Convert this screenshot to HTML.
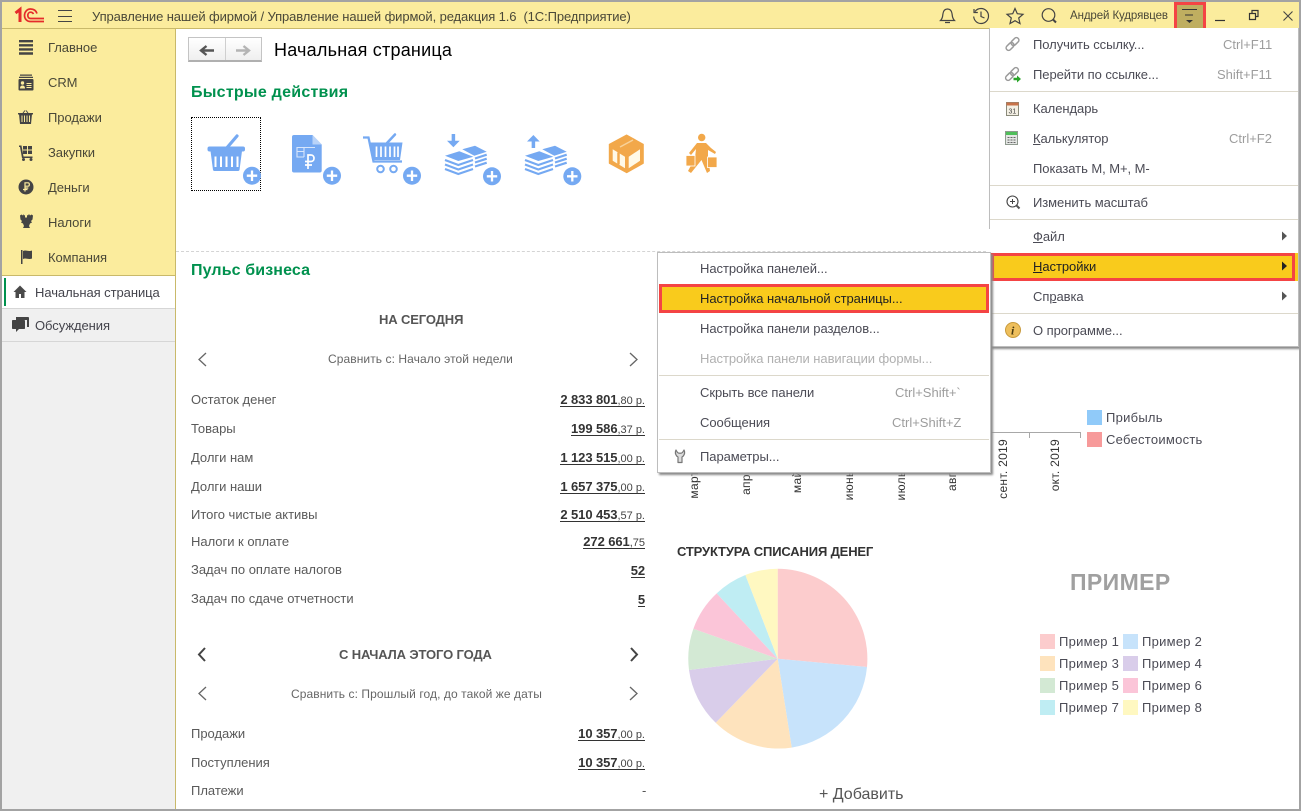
<!DOCTYPE html>
<html lang="ru"><head><meta charset="utf-8"><title>1С</title>
<style>
html,body{margin:0;padding:0;width:1301px;height:811px;overflow:hidden;background:#fff}
body{font-family:"Liberation Sans",Arial,sans-serif;position:relative;color:#4b4b4b}
.a{position:absolute}
.t{position:absolute;white-space:nowrap;line-height:16px;font-size:13px;letter-spacing:-.06px;margin-top:1px}
.side{color:#4a4838}
.m{color:#4b4b55}
.s{color:#9d9d9d;letter-spacing:0}
.l{color:#5a5a5a;letter-spacing:-.02px}
.lg{letter-spacing:.26px}
.h{font-weight:bold;color:#555;letter-spacing:-.13px}
.cmp{font-size:12px;color:#666;letter-spacing:.08px}
.v{position:absolute;right:656px;white-space:nowrap;line-height:13px;height:13px;margin-top:1px;font-size:13px;font-weight:bold;color:#333;border-bottom:1px solid #333;letter-spacing:-.08px}
.v small{font-size:11px;font-weight:normal;color:#444;letter-spacing:0}
.sep{position:absolute;height:1px;background:#dcd8cb}
u{text-decoration-thickness:1px}
.sq{position:absolute;width:15px;height:15px}
svg{position:absolute;left:0;top:0}
</style></head><body>

<!-- title bar -->
<div class="a" style="left:0;top:0;width:1301px;height:29px;background:#fbec9d;border-bottom:1px solid #c9b96a;box-sizing:border-box"></div>
<div class="t" style="left:92px;top:8px;color:#4a4838;letter-spacing:-.105px">Управление нашей фирмой / Управление нашей фирмой, редакция 1.6&nbsp; (1С:Предприятие)</div>
<div class="t" style="left:1070px;top:7px;font-size:11.5px;color:#4a4838;letter-spacing:-.1px">Андрей Кудрявцев</div>

<!-- sidebar -->
<div class="a" style="left:2px;top:29px;width:173px;height:247px;background:#fbec9d;border-bottom:1px solid #c9b96a;box-sizing:border-box"></div>
<div class="a" style="left:2px;top:309px;width:173px;height:502px;background:#f0f0f0"></div>
<div class="a" style="left:2px;top:308px;width:173px;height:1px;background:#d6d6d6"></div>
<div class="a" style="left:2px;top:341px;width:173px;height:1px;background:#d6d6d6"></div>
<div class="a" style="left:175px;top:29px;width:1px;height:782px;background:#c9b96a"></div>
<div class="a" style="left:4px;top:278px;width:2px;height:28px;background:#00914e"></div>
<div class="t side" style="left:48px;top:39px">Главное</div>
<div class="t side" style="left:48px;top:74px">CRM</div>
<div class="t side" style="left:48px;top:109px">Продажи</div>
<div class="t side" style="left:48px;top:144px">Закупки</div>
<div class="t side" style="left:48px;top:179px">Деньги</div>
<div class="t side" style="left:48px;top:214px">Налоги</div>
<div class="t side" style="left:48px;top:249px">Компания</div>
<div class="t" style="left:35px;top:284px;color:#44444c">Начальная страница</div>
<div class="t" style="left:35px;top:317px;color:#44444c">Обсуждения</div>

<!-- page head -->
<div class="a" style="left:188px;top:37px;width:74px;height:25px;box-sizing:border-box;border:1px solid #c4c4c4;border-bottom:2px solid #b0b0b0;background:linear-gradient(#fff,#efefef)"></div>
<div class="a" style="left:225px;top:38px;width:1px;height:22px;background:#cfcfcf"></div>
<div class="t" style="left:274px;top:39px;font-size:18px;line-height:20px;color:#000;letter-spacing:.22px">Начальная страница</div>
<div class="t" style="left:191px;top:83px;font-size:16px;line-height:18px;font-weight:bold;color:#00914e;letter-spacing:.25px">Быстрые действия</div>
<div class="a" style="left:191px;top:117px;width:70px;height:74px;box-sizing:border-box;border:1px dotted #000"></div>
<div class="a" style="left:176px;top:251px;width:815px;border-top:1px dashed #d4d4d4"></div>
<div class="t" style="left:191px;top:261px;font-size:16px;line-height:18px;font-weight:bold;color:#00914e;letter-spacing:.12px">Пульс бизнеса</div>

<!-- pulse -->
<div class="t h" style="left:379px;top:311px">НА СЕГОДНЯ</div>
<div class="t cmp" style="left:328px;top:350px">Сравнить с: Начало этой недели</div>
<div class="t l" style="left:191px;top:391px">Остаток денег</div>
<div class="t l" style="left:191px;top:420px">Товары</div>
<div class="t l" style="left:191px;top:449px">Долги нам</div>
<div class="t l" style="left:191px;top:478px">Долги наши</div>
<div class="t l" style="left:191px;top:506px">Итого чистые активы</div>
<div class="t l" style="left:191px;top:533px">Налоги к оплате</div>
<div class="t l" style="left:191px;top:561px">Задач по оплате налогов</div>
<div class="t l" style="left:191px;top:590px">Задач по сдаче отчетности</div>
<div class="v" style="top:392px">2 833 801<small>,80 р.</small></div>
<div class="v" style="top:421px">199 586<small>,37 р.</small></div>
<div class="v" style="top:450px">1 123 515<small>,00 р.</small></div>
<div class="v" style="top:479px">1 657 375<small>,00 р.</small></div>
<div class="v" style="top:507px">2 510 453<small>,57 р.</small></div>
<div class="v" style="top:534px">272 661<small>,75</small></div>
<div class="v" style="top:563px">52</div>
<div class="v" style="top:592px">5</div>
<div class="t h" style="left:339px;top:646px">С НАЧАЛА ЭТОГО ГОДА</div>
<div class="t cmp" style="left:291px;top:685px">Сравнить с: Прошлый год, до такой же даты</div>
<div class="t l" style="left:191px;top:725px">Продажи</div>
<div class="t l" style="left:191px;top:754px">Поступления</div>
<div class="t l" style="left:191px;top:782px">Платежи</div>
<div class="v" style="top:726px">10 357<small>,00 р.</small></div>
<div class="v" style="top:755px">10 357<small>,00 р.</small></div>
<div class="t" style="left:642px;top:782px;color:#555">-</div>

<!-- right charts -->
<div class="sq" style="left:1087px;top:410px;background:#90caf9"></div>
<div class="t m lg" style="left:1106px;top:409px">Прибыль</div>
<div class="sq" style="left:1087px;top:432px;background:#f79a9a"></div>
<div class="t m lg" style="left:1106px;top:431px">Себестоимость</div>
<div class="t" style="left:677px;top:543px;font-weight:bold;color:#333;letter-spacing:-.16px">СТРУКТУРА СПИСАНИЯ ДЕНЕГ</div>
<div class="t" style="left:1070px;top:568px;font-size:23px;line-height:26px;font-weight:bold;color:#a0a0a0;letter-spacing:.4px">ПРИМЕР</div>
<div class="sq" style="left:1040px;top:634px;background:#fccccd"></div><div class="t m lg" style="left:1059px;top:633px">Пример 1</div>
<div class="sq" style="left:1123px;top:634px;background:#c7e3fb"></div><div class="t m lg" style="left:1142px;top:633px">Пример 2</div>
<div class="sq" style="left:1040px;top:656px;background:#fee3bd"></div><div class="t m lg" style="left:1059px;top:655px">Пример 3</div>
<div class="sq" style="left:1123px;top:656px;background:#d9cdea"></div><div class="t m lg" style="left:1142px;top:655px">Пример 4</div>
<div class="sq" style="left:1040px;top:678px;background:#d3e9d4"></div><div class="t m lg" style="left:1059px;top:677px">Пример 5</div>
<div class="sq" style="left:1123px;top:678px;background:#fbc5d8"></div><div class="t m lg" style="left:1142px;top:677px">Пример 6</div>
<div class="sq" style="left:1040px;top:700px;background:#bfedf3"></div><div class="t m lg" style="left:1059px;top:699px">Пример 7</div>
<div class="sq" style="left:1123px;top:700px;background:#fff8c1"></div><div class="t m lg" style="left:1142px;top:699px">Пример 8</div>
<div class="t" style="left:819px;top:785px;font-size:16px;line-height:18px;color:#555;letter-spacing:0">+ Добавить</div>

<!-- base svg: icons on the page, pie, axis -->
<svg width="1301" height="811" viewBox="0 0 1301 811">
 <path d="M777.7 658.7V568.7A90 90 0 0 1 867 667Z" fill="#fccccd"/>
 <path d="M777.7 658.7L867 667A90 90 0 0 1 791.7 747.6Z" fill="#c7e3fb"/>
 <path d="M777.7 658.7L791.7 747.6A90 90 0 0 1 715.7 722.7Z" fill="#fee3bd"/>
 <path d="M777.7 658.7L715.7 722.7A90 90 0 0 1 689 670Z" fill="#d9cdea"/>
 <path d="M777.7 658.7L689 670A90 90 0 0 1 693.4 628.7Z" fill="#d3e9d4"/>
 <path d="M777.7 658.7L693.4 628.7A90 90 0 0 1 716.7 593.4Z" fill="#fbc5d8"/>
 <path d="M777.7 658.7L716.7 593.4A90 90 0 0 1 745.4 575Z" fill="#bfedf3"/>
 <path d="M777.7 658.7L745.4 575A90 90 0 0 1 777.7 568.7Z" fill="#fff8c1"/>

 <!-- axis -->
 <path d="M985 432.5H1081M1029.5 432.5V438M1080.5 432.5V438" stroke="#a8a8a8" fill="none"/>
 <g font-family="Liberation Sans,Arial,sans-serif" font-size="12" fill="#333" text-anchor="end" letter-spacing=".3">
  <text transform="translate(698,439) rotate(-90)">март 2019</text>
  <text transform="translate(750,439) rotate(-90)">апр. 2019</text>
  <text transform="translate(801,439) rotate(-90)">май 2019</text>
  <text transform="translate(853,439) rotate(-90)">июнь 2019</text>
  <text transform="translate(905,439) rotate(-90)">июль 2019</text>
  <text transform="translate(956,439) rotate(-90)">авг. 2019</text>
  <text transform="translate(1007,439) rotate(-90)">сент. 2019</text>
  <text transform="translate(1059,439) rotate(-90)">окт. 2019</text>
 </g>

 <!-- nav arrows -->
 <path d="M201 50.5H214M206.5 46L201 50.5L206.500 55" stroke="#555" stroke-width="2.400" fill="none"/>
 <path d="M236 50.5H249M243.5 46L249 50.5L243.500 55" stroke="#b4b4b4" stroke-width="2.400" fill="none"/>

 <!-- pulse chevrons -->
 <path d="M206 353L199 359.5L206 366M630 353L637 359.5L630 366M206 687L199 693.500L206 700M630 687L637 693.500L630 700" fill="none" stroke="#666" stroke-width="1.300"/>
 <path d="M205 648L199 654.5L205 661M631 648L637 654.5L631 661" fill="none" stroke="#444" stroke-width="2"/>

 <!-- 1C logo -->
 <g fill="none" stroke="#e52b2b">
  <path d="M15.500 13L20 9.500V22" stroke-width="3"/>
  <path d="M37 13.500C36 10.500 33.500 9 30.500 9C27 9 24.500 12 24.500 15.500C24.500 19 27 21.500 30.500 21.500H44" stroke-width="1.700"/>
  <path d="M33.500 14C33 13 32 12.200 30.600 12.200C29 12.200 27.800 13.600 27.800 15.400C27.800 17.200 29 18.500 30.600 18.500H44" stroke-width="1.700"/>
 </g>
 <!-- hamburger -->
 <path d="M58 10.500H72M58 16.500H72M58 21.500H72" stroke="#444" stroke-width="1"/>

 <!-- title right icons -->
 <g fill="none" stroke="#444" stroke-width="1.200">
  <path d="M940.500 20.500H954.500C952 18 952.500 16 952 13.500C951.500 10.500 950 9 947.500 9C945 9 943.500 10.500 943 13.500C942.500 16 943 18 940.500 20.500ZM945 22.500H950"/>
  <path d="M975 11.500C976.500 9.500 978.500 8.500 981 8.500C985.200 8.500 988.500 11.800 988.500 16C988.500 20.200 985.200 23.500 981 23.500C977 23.500 974 20.500 973.700 16.500M974 9V12.500H977.800M981 11.500V16.500L984.500 18"/>
  <path d="M1015 8.500L1017.300 13.700L1023 14.300L1018.700 18L1020 23.500L1015 20.700L1010 23.500L1011.300 18L1007 14.300L1012.700 13.700Z"/>
  <circle cx="1048.500" cy="15" r="6.300"/><path d="M1053 19.500L1056 22.500" stroke-width="2"/>
 </g>
 <!-- window buttons -->
 <rect x="1175" y="3" width="30" height="28.500" fill="#bfae60"/>
 <path d="M1182 9.500H1197M1185 15H1193" stroke="#333" stroke-width="1"/>
 <path d="M1186 20H1193L1189.500 23Z" fill="#333"/>
 <rect x="1175.500" y="3.500" width="29" height="27.500" fill="none" stroke="#f44444" stroke-width="3"/>
 <path d="M1215 20.500H1225" stroke="#333" stroke-width="1.200"/>
 <path d="M1249.500 13.500h6v6h-6zM1252 13V10.500h6v6h-2.500" fill="none" stroke="#333" stroke-width="1.200"/>
 <path d="M1283.500 11.500L1292.500 20.500M1292.500 11.500L1283.500 20.500" stroke="#444" stroke-width="1.100"/>

 <!-- sidebar icons -->
 <g fill="#444">
  <path d="M19 40h14v2.400H19zM19 44.100h14v2.400H19zM19 48.200h14v2.400H19zM19 52.300h14v2.400H19z"/>
  <path d="M20 74.500h12v1.200H20zM19 76.800h14v1.200H19z"/>
  <rect x="18.500" y="79" width="15" height="11.500" rx="1"/>
  <path d="M19 114h13l-1 10H20zM18 113h15v1.500H18z"/>
  <path d="M23 113L25 110.500M28 113L26 110.500" stroke="#444" fill="none"/>
  <path d="M19 145.500h2.500l2 11h9v1.500h-10.500l-2-11H19z"/>
  <rect x="23" y="146" width="4" height="3.500"/><rect x="28" y="146" width="4" height="3.500"/>
  <rect x="23" y="150.500" width="4" height="3.500"/><rect x="28" y="150.500" width="4" height="3.500"/>
  <circle cx="23.500" cy="159.500" r="1.500"/><circle cx="31" cy="159.500" r="1.500"/>
  <circle cx="26" cy="187" r="7.500"/>
  <path d="M23 214l1 1.500 1-.5v2.500h2V215l1 .5 1-1.500 1 1.500 1.500-1 1.500 1-.5 4-1.500 1.500 1 1.500-2 1-1 2.500 1 2h-7l1-2-1-2.500-2-1 1-1.500-1.500-1.500-.5-4 1.500-1 1.500 1z"/>
  <path d="M21 250h1.500v14H21zM23 251c3-1.500 5 1 9-.5v8c-4 1.500-6-1-9 .5z"/>
  <path d="M20 285.500L13.500 292h2v6h3.500v-4h2v4h3.500v-6h2z" fill="#4a4a4a"/>
  <path d="M16 317h12c1 0 1 1 1 1v9h-2v-7H16z"/>
  <path d="M13 320h11c1 0 1 .5 1 1v7c0 1-.5 1-1 1h-5l-3 3v-3h-3c-1 0-1-.5-1-1v-7c0-.5 0-1 1-1z"/>
 </g>
 <g fill="none" stroke="#fbec9d">
  <path d="M22 115.500v6.500M24.500 115.500v6.500M27 115.500v6.500M29.500 115.500v6.500"/>
  <path d="M26.500 83.500h5M26.500 85.500h5M26.500 87.500h5" stroke-width="1"/>
 </g>
 <circle cx="22.500" cy="83" r="1.700" fill="#fbec9d"/><path d="M20 88.500c0-2 1-3 2.500-3s2.500 1 2.500 3z" fill="#fbec9d"/>
 <path d="M24.500 188H28.300M24.500 186.200H28C29.800 186.200 29.800 182.800 28 182.800H25V191.500M23 189.500H27.500" fill="none" stroke="#fbec9d" stroke-width="1.200"/>

 <!-- quick action icons -->
 <path d="M225 150L237 136" stroke="#75a9f2" stroke-width="3.200" stroke-linecap="round"/>
 <rect x="207.500" y="146.500" width="37.500" height="5" rx="2" fill="#75a9f2"/>
 <path d="M210.500 151H242L239.500 170A1.500 1.500 0 0 1 238 171H214.500A1.500 1.500 0 0 1 213 170Z" fill="#75a9f2"/>
 <path d="M215.500 156.500V167M221 156.500V167M226.500 156.500V167M232 156.500V167M237.500 156.500V167" stroke="#fff" stroke-width="2"/>

 <path d="M294 135H312.500L321.700 144.500V170.500A2 2 0 0 1 319.700 172.500H294A2 2 0 0 1 292 170.500V137A2 2 0 0 1 294 135Z" fill="#75a9f2"/>
 <path d="M312.500 135V144.500H321.700Z" fill="#b9d3f8"/>
 <path d="M297 147.500H315M297 151.500H304M297 147V157H304M304 147V157" stroke="#d8e6fb" stroke-width="1.100" fill="none"/>
 <path d="M308 169V155H311C315 155 315 161.500 311 161.500H305M305 165H312" fill="none" stroke="#fff" stroke-width="1.700"/>

 <path d="M363 137.500H368.500L373.500 161.500H402" fill="none" stroke="#75a9f2" stroke-width="2.300"/>
 <path d="M387 143L395 134.500" stroke="#75a9f2" stroke-width="2.500" stroke-linecap="round"/>
 <path d="M370 142.500H402.500L400 160H373.500Z" fill="#75a9f2"/>
 <path d="M376.500 146.500V157M381 146.500V157M385.500 146.500V157M390 146.500V157M394.500 146.500V157M398 146.500V157" stroke="#fff" stroke-width="1.700"/>
 <circle cx="380.500" cy="169" r="3.300" fill="none" stroke="#75a9f2" stroke-width="2"/>
 <circle cx="393.500" cy="169" r="3.300" fill="none" stroke="#75a9f2" stroke-width="2"/>

 <g fill="#75a9f2">
  <path d="M445 155.700L459.300 151.300L473.300 156.700L458.300 161Z"/>
  <path d="M462.300 149.300L475 145.700L486.700 151.700L474.300 155.700Z"/>
 </g>
 <g fill="none" stroke="#75a9f2" stroke-width="2.200">
  <path d="M445 160L458.300 165L473 160M445 164.500L458.300 169.500L473 164.500M445 169L458.300 174L473 169"/>
  <path d="M475 158.500L486.700 154.700M475 162.500L486.700 158.700M475 166.500L486.700 162.700"/>
 </g>
 <path d="M453.400 134V142" stroke="#75a9f2" stroke-width="3.500"/>
 <path d="M447 140.700H459.700L453.400 147.300Z" fill="#75a9f2"/>
 <g fill="#75a9f2">
  <path d="M525 155.700L539.300 151.300L553.300 156.700L538.300 161Z"/>
  <path d="M542.300 149.300L555 145.700L566.700 151.700L554.300 155.700Z"/>
 </g>
 <g fill="none" stroke="#75a9f2" stroke-width="2.200">
  <path d="M525 160L538.300 165L553 160M525 164.500L538.300 169.500L553 164.500M525 169L538.300 174L553 169"/>
  <path d="M555 158.500L566.700 154.700M555 162.500L566.700 158.700M555 166.500L566.700 162.700"/>
 </g>
 <path d="M533.400 140V148" stroke="#75a9f2" stroke-width="3.500"/>
 <path d="M527 141.500H539.700L533.400 135Z" fill="#75a9f2"/>

 <circle cx="252" cy="175.700" r="9" fill="#75a9f2"/><path d="M252 170.500V181M246.800 175.700H257.200" stroke="#fff" stroke-width="2.300"/>
 <circle cx="332" cy="175.700" r="9" fill="#75a9f2"/><path d="M332 170.500V181M326.800 175.700H337.200" stroke="#fff" stroke-width="2.300"/>
 <circle cx="412" cy="175.700" r="9" fill="#75a9f2"/><path d="M412 170.500V181M406.800 175.700H417.200" stroke="#fff" stroke-width="2.300"/>
 <circle cx="492" cy="176.300" r="9" fill="#75a9f2"/><path d="M492 171V181.500M486.800 176.300H497.200" stroke="#fff" stroke-width="2.300"/>
 <circle cx="572.300" cy="176.300" r="9" fill="#75a9f2"/><path d="M572.300 171V181.500M567 176.300H577.500" stroke="#fff" stroke-width="2.300"/>

 <!-- box -->
 <path d="M626.700 135L643.300 144.300V163.300L626.700 172.700L609.300 163.300V144.300Z" fill="#f2a84a" stroke="#f2a84a" stroke-linejoin="round"/>
 <path d="M612.700 149.300L625 156.700V168.300L612.700 160.700ZM628.700 156.700L640 149.300V160.700L628.700 168.300Z" fill="#fff9e6"/>
 <path d="M618.500 152.500V164.500" stroke="#f2a84a" stroke-width="2.500"/>
 <path d="M620 147L633 140" stroke="#f8d29a" stroke-width="1.500"/>
 <!-- person -->
 <circle cx="701.700" cy="137.500" r="3.700" fill="#f2a84a"/>
 <path d="M697 143L706 143L711 148L716 152L715 154L708 150L708 158L710 171L707 173L701.500 160L691 173L688 171L695 158L696 149L691 155L689 153Z" fill="#f2a84a"/>
 <rect x="686" y="155.500" width="9" height="10.500" fill="#f2a84a" stroke="#fff" stroke-width=".8"/>
 <rect x="707.500" y="157" width="9.500" height="10.500" fill="#f2a84a" stroke="#fff" stroke-width=".8"/>
</svg>

<!-- main menu -->
<div class="a" style="left:989px;top:28px;width:310px;height:319px;background:#fff;border:1px solid #bdbdbd;border-top:none;box-sizing:border-box;box-shadow:2px 2px 2px #8a8a8a"></div>
<div class="a" style="left:986px;top:229px;width:5px;height:23px;background:#fff"></div>
<div class="sep" style="left:990px;top:91px;width:308px"></div>
<div class="sep" style="left:990px;top:185px;width:308px"></div>
<div class="sep" style="left:990px;top:219px;width:308px"></div>
<div class="sep" style="left:990px;top:313px;width:308px"></div>
<div class="t m" style="left:1033px;top:36px">Получить ссылку...</div><div class="t s" style="left:1223px;top:36px">Ctrl+F11</div>
<div class="t m" style="left:1033px;top:66px">Перейти по ссылке...</div><div class="t s" style="left:1217px;top:66px">Shift+F11</div>
<div class="t m" style="left:1033px;top:100px">Календарь</div>
<div class="t m" style="left:1033px;top:130px"><u>К</u>алькулятор</div><div class="t s" style="left:1229px;top:130px">Ctrl+F2</div>
<div class="t m" style="left:1033px;top:160px">Показать M, M+, M-</div>
<div class="t m" style="left:1033px;top:194px">Изменить масштаб</div>
<div class="t m" style="left:1033px;top:228px"><u>Ф</u>айл</div>
<div class="a" style="left:992px;top:253px;width:306px;height:28px;background:#f9cb1c"></div>
<div class="a" style="left:991px;top:253px;width:304px;height:28px;box-sizing:border-box;border:3px solid #f44444"></div>
<div class="t" style="left:1033px;top:258px;color:#222"><u>Н</u>астройки</div>
<div class="t m" style="left:1033px;top:288px">Сп<u>р</u>авка</div>
<div class="t m" style="left:1033px;top:322px">О программе...</div>

<!-- sub menu -->
<div class="a" style="left:657px;top:252px;width:334px;height:221px;background:#fff;border:1px solid #bdbdbd;box-sizing:border-box;box-shadow:2px 2px 2px #8a8a8a"></div>
<div class="sep" style="left:659px;top:375px;width:330px"></div>
<div class="sep" style="left:659px;top:439px;width:330px"></div>
<div class="t m" style="left:700px;top:260px">Настройка панелей...</div>
<div class="a" style="left:659px;top:284px;width:330px;height:29px;box-sizing:border-box;background:#f9cb1c;border:3px solid #f44444"></div>
<div class="t" style="left:700px;top:290px;color:#222">Настройка начальной страницы...</div>
<div class="t m" style="left:700px;top:320px">Настройка панели разделов...</div>
<div class="t" style="left:700px;top:350px;color:#b0b0b0">Настройка панели навигации формы...</div>
<div class="t m" style="left:700px;top:384px">Скрыть все панели</div><div class="t s" style="left:895px;top:384px">Ctrl+Shift+`</div>
<div class="t m" style="left:700px;top:414px">Сообщения</div><div class="t s" style="left:892px;top:414px">Ctrl+Shift+Z</div>
<div class="t m" style="left:700px;top:448px">Параметры...</div>

<!-- menu icons -->
<svg width="1301" height="811" viewBox="0 0 1301 811">
 <g fill="none" stroke="#9a9a9a" stroke-width="1.500">
  <g transform="translate(1012.500 44) rotate(45)"><rect x="-2.500" y="-8" width="5" height="9" rx="2.500"/><rect x="-2.500" y="-1" width="5" height="9" rx="2.500"/></g>
  <g transform="translate(1012 74) rotate(45)"><rect x="-2.500" y="-8" width="5" height="9" rx="2.500"/><rect x="-2.500" y="-1" width="5" height="9" rx="2.500"/></g>
 </g>
 <path d="M1013.500 77.800H1017V75.500L1021 79L1017 82.500V80.200H1013.500Z" fill="#2aa52a"/>
 <rect x="1006.500" y="102.500" width="12" height="13" fill="#f4f0e4" stroke="#8a8a7a"/>
 <rect x="1006.500" y="102.500" width="12" height="3" fill="#c8734a"/>
 <text x="1008.500" y="113.500" font-family="Liberation Sans,Arial,sans-serif" font-size="7" fill="#444">31</text>
 <rect x="1005.500" y="131.500" width="12" height="13" fill="#e4e6e4" stroke="#8f9a8f"/>
 <rect x="1006" y="132" width="11" height="3" fill="#4fbf5a"/>
 <path d="M1007.500 137.500h2M1010.500 137.500h2M1013.500 137.500h2M1007.500 140h2M1010.500 140h2M1013.500 140h2M1007.500 142.500h2M1010.500 142.500h2M1013.500 142.500h2" stroke="#666"/>
 <circle cx="1012.500" cy="201.500" r="5.500" fill="none" stroke="#444" stroke-width="1.100"/>
 <path d="M1010 201.500H1015M1012.500 199V204" stroke="#444"/>
 <path d="M1016.500 205.500L1019.500 208.500" stroke="#555" stroke-width="2"/>
 <circle cx="1013" cy="330" r="7.500" fill="#eebf5c" stroke="#c89a3c"/>
 <text x="1011" y="334.500" font-family="Liberation Serif,serif" font-weight="bold" font-style="italic" font-size="12" fill="#4a3a10">i</text>
 <path d="M1282 231.500L1287 236L1282 240.500ZM1282 291.500L1287 296L1282 300.500Z" fill="#555"/>
 <path d="M1282 261.500L1287 266L1282 270.500Z" fill="#222"/>
 <path d="M676 450C674.500 453 676 456 678 457V462.500H682V457C684 456 685.500 453 684 450L682.500 452.500C681.500 453.500 678.500 453.500 677.500 452.500Z" fill="#ddd" stroke="#777" stroke-width="1.200" stroke-linejoin="round"/>
</svg>

<!-- outer frame -->
<div class="a" style="left:0;top:0;width:1301px;height:811px;box-sizing:border-box;border:2px solid #a3a3a3"></div>
</body></html>
